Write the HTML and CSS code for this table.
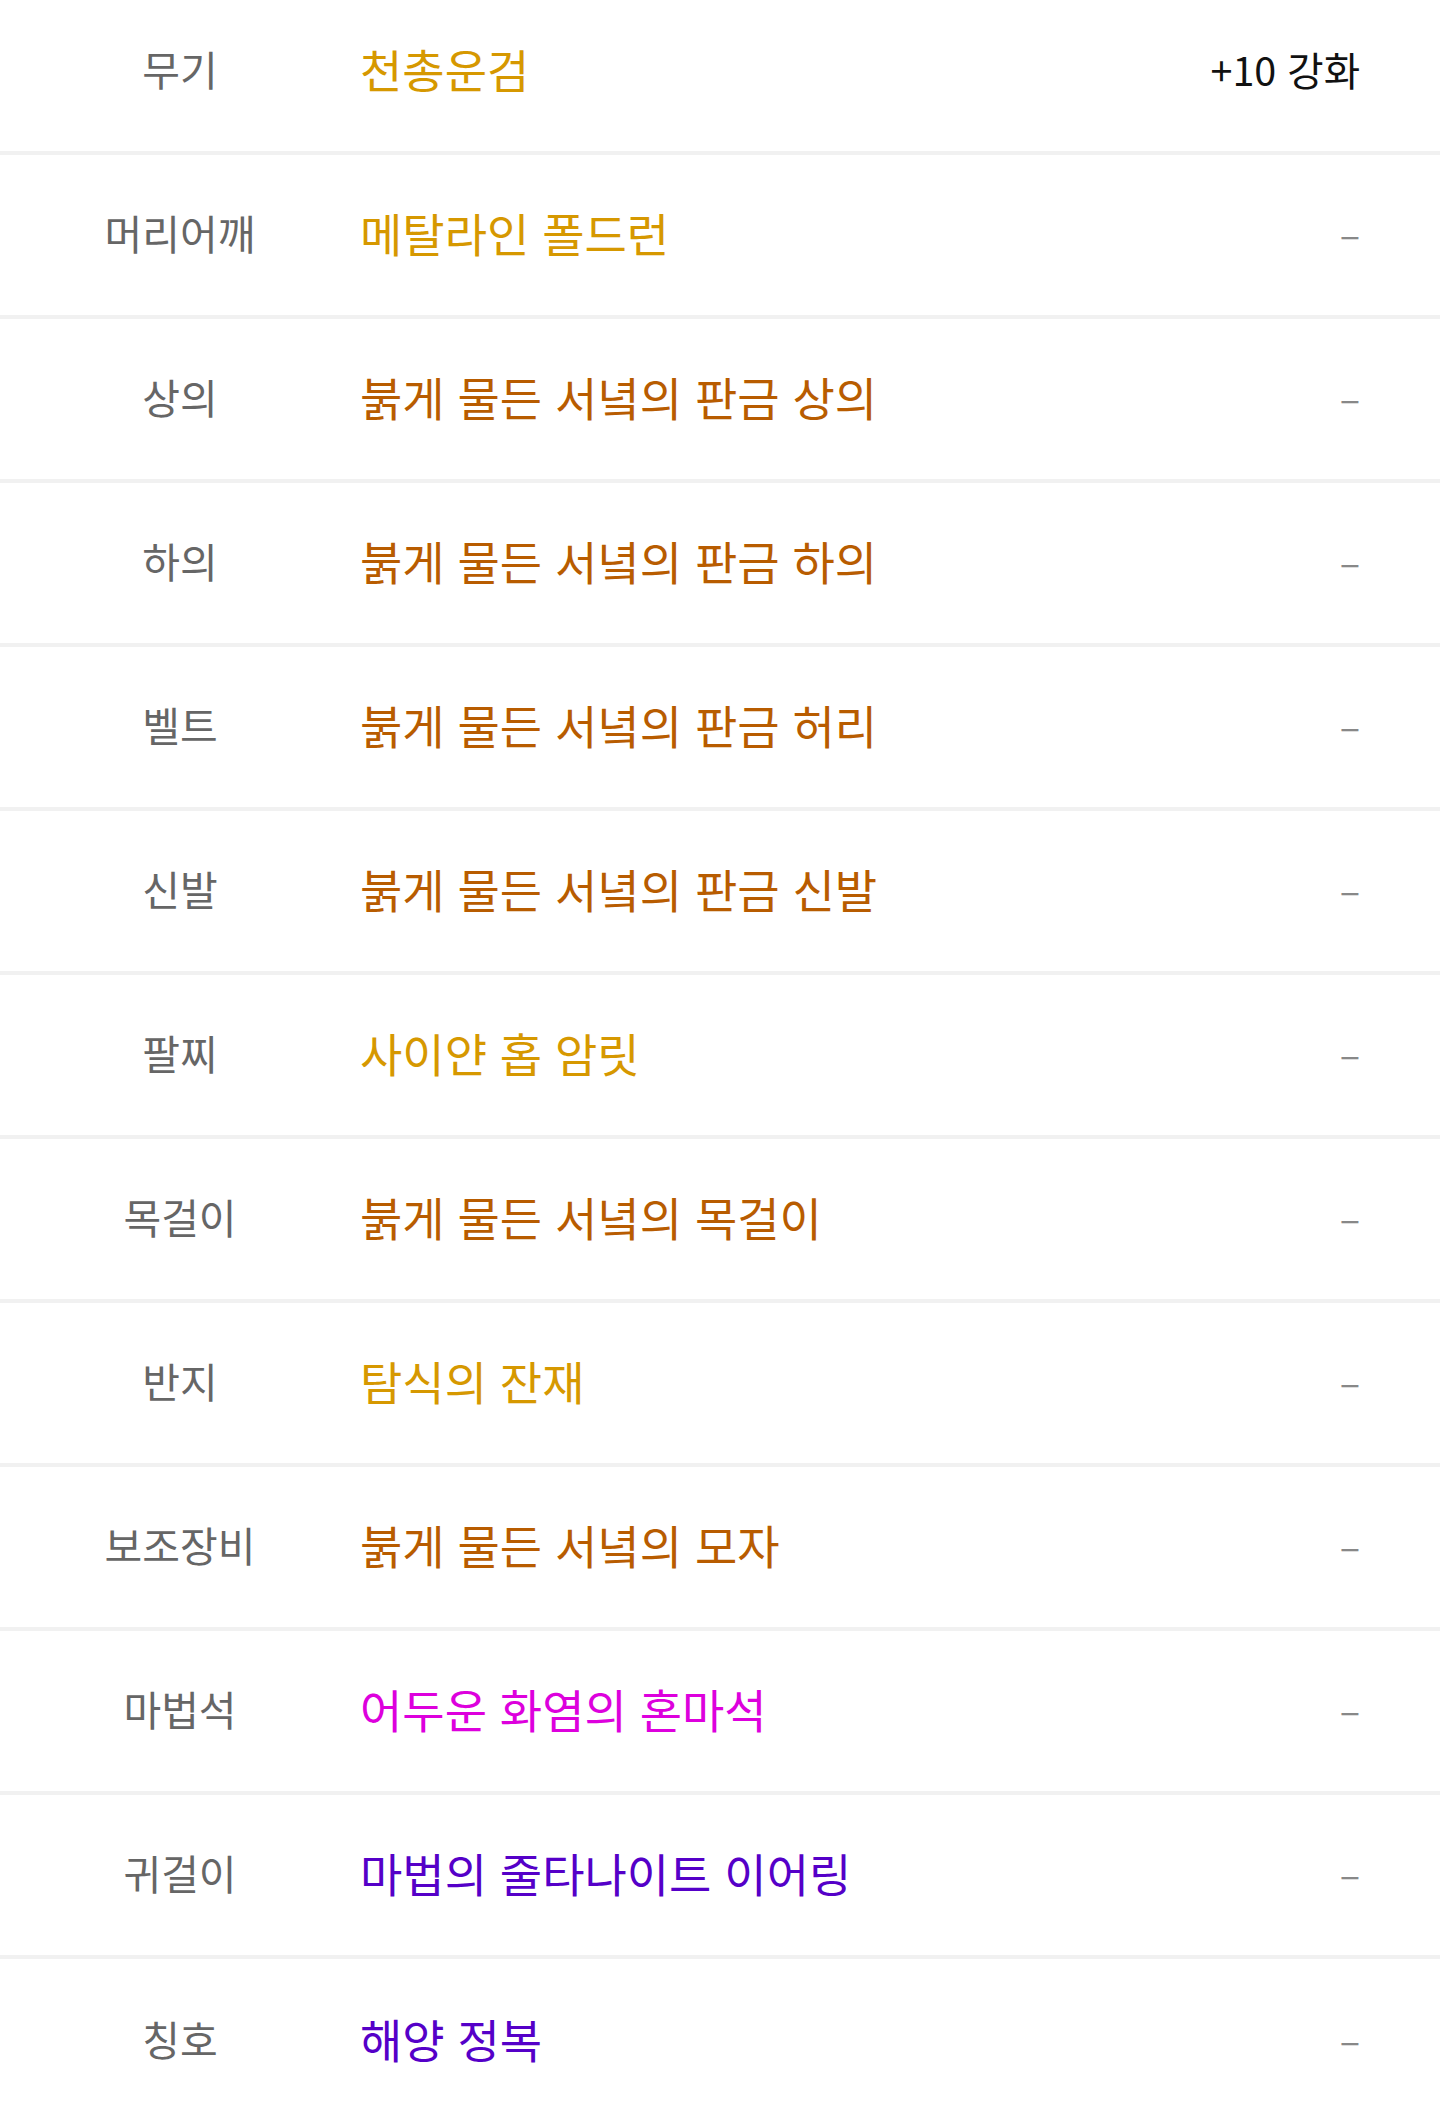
FILE: index.html
```html
<!DOCTYPE html>
<html lang="ko">
<head>
<meta charset="utf-8">
<title>장비</title>
<link rel="stylesheet" href="styles.css">
</head>
<body>
<div class="equip-list">
  <div class="row"><div class="label">무기</div><div class="value gold">천총운검</div><div class="extra">+10 강화</div></div>
  <div class="row"><div class="label">머리어깨</div><div class="value gold">메탈라인 폴드런</div><div class="extra dash">–</div></div>
  <div class="row"><div class="label">상의</div><div class="value brown">붉게 물든 서녘의 판금 상의</div><div class="extra dash">–</div></div>
  <div class="row"><div class="label">하의</div><div class="value brown">붉게 물든 서녘의 판금 하의</div><div class="extra dash">–</div></div>
  <div class="row"><div class="label">벨트</div><div class="value brown">붉게 물든 서녘의 판금 허리</div><div class="extra dash">–</div></div>
  <div class="row"><div class="label">신발</div><div class="value brown">붉게 물든 서녘의 판금 신발</div><div class="extra dash">–</div></div>
  <div class="row"><div class="label">팔찌</div><div class="value gold">사이얀 홉 암릿</div><div class="extra dash">–</div></div>
  <div class="row"><div class="label">목걸이</div><div class="value brown">붉게 물든 서녘의 목걸이</div><div class="extra dash">–</div></div>
  <div class="row"><div class="label">반지</div><div class="value gold">탐식의 잔재</div><div class="extra dash">–</div></div>
  <div class="row"><div class="label">보조장비</div><div class="value brown">붉게 물든 서녘의 모자</div><div class="extra dash">–</div></div>
  <div class="row"><div class="label">마법석</div><div class="value magenta">어두운 화염의 혼마석</div><div class="extra dash">–</div></div>
  <div class="row"><div class="label">귀걸이</div><div class="value purple">마법의 줄타나이트 이어링</div><div class="extra dash">–</div></div>
  <div class="row"><div class="label">칭호</div><div class="value purple">해양 정복</div><div class="extra dash">–</div></div>
</div>
</body>
</html>
```
FILE: styles.css
```css
html, body {
  margin: 0;
  padding: 0;
  background: #ffffff;
}
body {
  font-family: "Noto Sans CJK KR", "Noto Sans", sans-serif;
  overflow: hidden;
}
.equip-list {
  margin-top: -9px;
}
.row {
  box-sizing: border-box;
  display: grid;
  grid-template-columns: 360px 1fr auto;
  align-items: center;
  height: 164px;
  padding: 0 80px 6px 0;
  border-bottom: 4px solid #f1f1f1;
}
.row:last-child {
  border-bottom: none;
}
.label {
  text-align: center;
  font-size: 41px;
  color: #666666;
}
.value {
  font-size: 46px;
}
.extra {
  font-size: 39.5px;
  color: #111111;
}
.extra.dash {
  color: #888888;
  font-size: 38px;
}
.gold { color: #d69800; }
.brown { color: #b85c00; }
.magenta { color: #dd00dd; }
.purple { color: #5500c8; }
```
